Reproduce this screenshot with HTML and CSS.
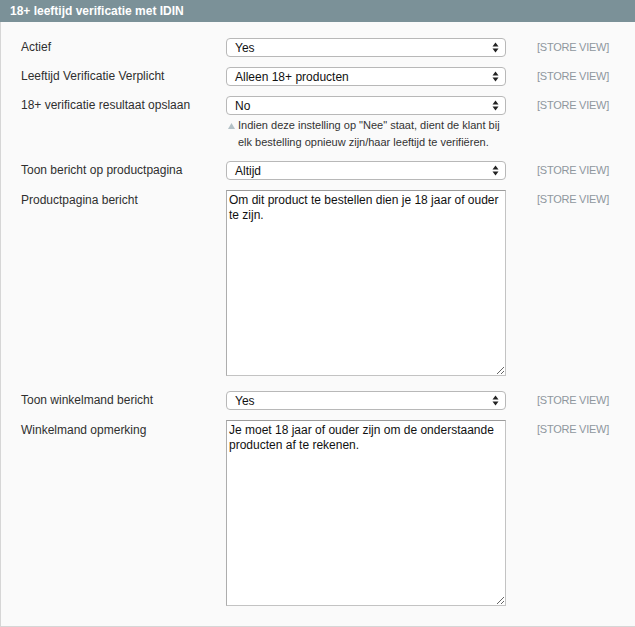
FILE: index.html
```html
<!DOCTYPE html>
<html>
<head>
<meta charset="utf-8">
<link rel="stylesheet" href="styles.css">
</head>
<body>
<div class="section">
  <div class="section-head">18+ leeftijd verificatie met IDIN</div>
  <div class="section-body">
    <div class="row">
      <div class="label">Actief</div>
      <div class="value">
        <div class="select"><span>Yes</span><svg class="arrows" width="7" height="11" viewBox="0 0 7 11"><path d="M3.5 0.5 L6.5 4.5 L0.5 4.5 Z M3.5 10.5 L6.5 6.5 L0.5 6.5 Z" fill="#222"/></svg></div>
      </div>
      <div class="scope">[STORE VIEW]</div>
    </div>
    <div class="row">
      <div class="label">Leeftijd Verificatie Verplicht</div>
      <div class="value">
        <div class="select"><span>Alleen 18+ producten</span><svg class="arrows" width="7" height="11" viewBox="0 0 7 11"><path d="M3.5 0.5 L6.5 4.5 L0.5 4.5 Z M3.5 10.5 L6.5 6.5 L0.5 6.5 Z" fill="#222"/></svg></div>
      </div>
      <div class="scope">[STORE VIEW]</div>
    </div>
    <div class="row">
      <div class="label">18+ verificatie resultaat opslaan</div>
      <div class="value">
        <div class="select"><span>No</span><svg class="arrows" width="7" height="11" viewBox="0 0 7 11"><path d="M3.5 0.5 L6.5 4.5 L0.5 4.5 Z M3.5 10.5 L6.5 6.5 L0.5 6.5 Z" fill="#222"/></svg></div>
        <div class="note"><svg class="note-icon" width="7" height="6" viewBox="0 0 7 6"><path d="M3.5 0 L7 6 L0 6 Z" fill="#b3c1c7"/></svg>Indien deze instelling op "Nee" staat, dient de klant bij elk bestelling opnieuw zijn/haar leeftijd te verifiëren.</div>
      </div>
      <div class="scope">[STORE VIEW]</div>
    </div>
    <div class="row">
      <div class="label">Toon bericht op productpagina</div>
      <div class="value">
        <div class="select"><span>Altijd</span><svg class="arrows" width="7" height="11" viewBox="0 0 7 11"><path d="M3.5 0.5 L6.5 4.5 L0.5 4.5 Z M3.5 10.5 L6.5 6.5 L0.5 6.5 Z" fill="#222"/></svg></div>
      </div>
      <div class="scope">[STORE VIEW]</div>
    </div>
    <div class="row row-area">
      <div class="label label-area">Productpagina bericht</div>
      <div class="value">
        <textarea class="area">Om dit product te bestellen dien je 18 jaar of ouder te zijn.</textarea>
      </div>
      <div class="scope">[STORE VIEW]</div>
    </div>
    <div class="row">
      <div class="label">Toon winkelmand bericht</div>
      <div class="value">
        <div class="select"><span>Yes</span><svg class="arrows" width="7" height="11" viewBox="0 0 7 11"><path d="M3.5 0.5 L6.5 4.5 L0.5 4.5 Z M3.5 10.5 L6.5 6.5 L0.5 6.5 Z" fill="#222"/></svg></div>
      </div>
      <div class="scope">[STORE VIEW]</div>
    </div>
    <div class="row row-area">
      <div class="label label-area">Winkelmand opmerking</div>
      <div class="value">
        <textarea class="area">Je moet 18 jaar of ouder zijn om de onderstaande producten af te rekenen.</textarea>
      </div>
      <div class="scope">[STORE VIEW]</div>
    </div>
  </div>
</div>
</body>
</html>
```
FILE: styles.css
```css
html, body {
  margin: 0;
  padding: 0;
  background: #ffffff;
}
body {
  font-family: "Liberation Sans", Arial, sans-serif;
  font-size: 12px;
  color: #2f2f2f;
}
.section {
  width: 635px;
  height: 627px;
  box-sizing: border-box;
  background: #fafafa;
  border-left: 1px solid #d6d6d6;
  border-bottom: 1px solid #d6d6d6;
}
.section-head {
  height: 22px;
  line-height: 22px;
  margin-left: -1px;
  padding-left: 10px;
  background: #7b9198;
  color: #ffffff;
  font-weight: bold;
  font-size: 12px;
}
.section-body {
  padding: 16px 0 0 20px;
}
.row {
  display: flex;
  align-items: flex-start;
  margin-bottom: 10px;
}
.row-area {
  margin-bottom: 15px;
}
.label {
  width: 205px;
  line-height: 19px;
  color: #2f2f2f;
}
.label-area {
  padding-top: 1px;
}
.value {
  width: 280px;
}
.scope {
  margin-left: 31px;
  line-height: 19px;
  font-size: 11px;
  letter-spacing: -0.25px;
  color: #8f979e;
}
.select {
  height: 19px;
  box-sizing: border-box;
  border: 1px solid #b8b8b8;
  border-radius: 4px;
  background: #ffffff;
  display: flex;
  align-items: center;
  justify-content: space-between;
  padding: 0 6px 0 8px;
  font-size: 12px;
  color: #111;
}
.arrows {
  display: block;
}
.note {
  margin-top: 2px;
  padding-left: 12px;
  position: relative;
  font-size: 11px;
  line-height: 17px;
  color: #333;
}
.note-icon {
  position: absolute;
  left: 2px;
  top: 6px;
}
.area {
  display: block;
  width: 280px;
  height: 186px;
  box-sizing: border-box;
  margin: 0;
  padding: 2px 2px;
  border: 1px solid #c3c3c3;
  border-top-color: #9c9c9c;
  border-left-color: #adadad;
  background: #ffffff;
  font-family: "Liberation Sans", Arial, sans-serif;
  font-size: 12px;
  line-height: 15px;
  color: #111;
  resize: both;
}
```
